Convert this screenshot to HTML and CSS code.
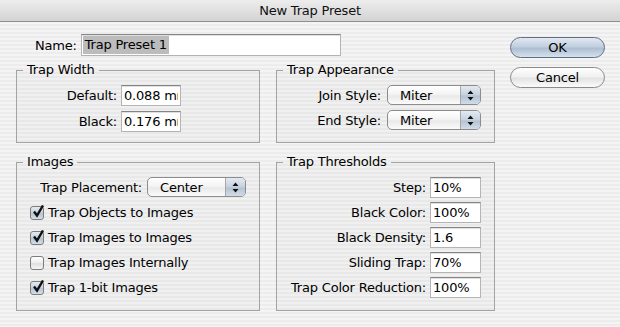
FILE: index.html
```html
<!DOCTYPE html>
<html lang="en">
<head>
    <meta charset="UTF-8">
    <title>New Trap Preset</title>
    <link rel="stylesheet" href="styles.css">
</head>
<body>
    <div class="titlebar">New Trap Preset</div>
    <div class="dialog">
        <div class="form">
            <div class="name-row">
                <label>Name:</label>
                <div class="textfield name-field"><span class="selected-text">Trap Preset 1</span></div>
            </div>
            <div class="groups">
                <fieldset class="group trap-width">
                    <legend>Trap Width</legend>
                    <div class="field-grid">
                        <label>Default:</label>
                        <input class="textfield" type="text" value="0.088 mm">
                        <label>Black:</label>
                        <input class="textfield" type="text" value="0.176 mm">
                    </div>
                </fieldset>
                <fieldset class="group trap-appearance">
                    <legend>Trap Appearance</legend>
                    <div class="field-grid popups">
                        <label>Join Style:</label>
                        <div class="popup"><span>Miter</span><span class="popup-arrows"><svg width="7" height="11" viewBox="0 0 7 11"><path d="M3.5 0.5 L6.5 4 L0.5 4 Z M3.5 10.5 L6.5 7 L0.5 7 Z" fill="#111"/></svg></span></div>
                        <label>End Style:</label>
                        <div class="popup"><span>Miter</span><span class="popup-arrows"><svg width="7" height="11" viewBox="0 0 7 11"><path d="M3.5 0.5 L6.5 4 L0.5 4 Z M3.5 10.5 L6.5 7 L0.5 7 Z" fill="#111"/></svg></span></div>
                    </div>
                </fieldset>
                <fieldset class="group images">
                    <legend>Images</legend>
                    <div class="placement-row">
                        <label>Trap Placement:</label>
                        <div class="popup wide-popup"><span>Center</span><span class="popup-arrows"><svg width="7" height="11" viewBox="0 0 7 11"><path d="M3.5 0.5 L6.5 4 L0.5 4 Z M3.5 10.5 L6.5 7 L0.5 7 Z" fill="#111"/></svg></span></div>
                    </div>
                    <div class="check-row"><span class="checkbox checked"><svg width="14" height="14" viewBox="0 0 14 14"><path d="M3 6.5 L6 10.5 L12 0.5" fill="none" stroke="#111" stroke-width="2.4"/></svg></span>Trap Objects to Images</div>
                    <div class="check-row"><span class="checkbox checked"><svg width="14" height="14" viewBox="0 0 14 14"><path d="M3 6.5 L6 10.5 L12 0.5" fill="none" stroke="#111" stroke-width="2.4"/></svg></span>Trap Images to Images</div>
                    <div class="check-row"><span class="checkbox"></span>Trap Images Internally</div>
                    <div class="check-row"><span class="checkbox checked"><svg width="14" height="14" viewBox="0 0 14 14"><path d="M3 6.5 L6 10.5 L12 0.5" fill="none" stroke="#111" stroke-width="2.4"/></svg></span>Trap 1-bit Images</div>
                </fieldset>
                <fieldset class="group thresholds">
                    <legend>Trap Thresholds</legend>
                    <div class="field-grid">
                        <label>Step:</label>
                        <input class="textfield" type="text" value="10%">
                        <label>Black Color:</label>
                        <input class="textfield" type="text" value="100%">
                        <label>Black Density:</label>
                        <input class="textfield" type="text" value="1.6">
                        <label>Sliding Trap:</label>
                        <input class="textfield" type="text" value="70%">
                        <label>Trap Color Reduction:</label>
                        <input class="textfield" type="text" value="100%">
                    </div>
                </fieldset>
            </div>
        </div>
        <div class="buttons">
            <button class="btn default">OK</button>
            <button class="btn">Cancel</button>
        </div>
    </div>
</body>
</html>
```

FILE: styles.css
```css
body {
    margin: 0;
    width: 620px;
    height: 327px;
    overflow: hidden;
    font-family: 'DejaVu Sans', sans-serif;
    font-size: 13px;
    letter-spacing: -0.2px;
    color: #000;
    background: repeating-linear-gradient(#ececec 0 2px, #f4f4f4 2px 4px);
}
.titlebar {
    height: 21px;
    line-height: 22px;
    text-align: center;
    color: #111;
    background: linear-gradient(#ededed, #d3d3d3);
    border-bottom: 1px solid #8e8e8e;
}
.dialog {
    display: flex;
    padding: 12px 0 0 16px;
    gap: 15px;
}
.form {
    display: flex;
    flex-direction: column;
}
.name-row {
    display: flex;
    align-items: center;
    gap: 4px;
    padding-left: 19px;
}
.textfield {
    box-sizing: border-box;
    height: 21px;
    margin: 0;
    padding: 0 2px;
    font-family: inherit;
    font-size: 13px;
    letter-spacing: -0.2px;
    color: #000;
    background: #fff;
    border: 1px solid #b4b4b4;
    border-top-color: #858585;
    box-shadow: inset 0 1px 0 #e0e0e0;
    border-radius: 0;
    outline: none;
}
.name-field {
    width: 260px;
    height: 22px;
    display: flex;
    align-items: center;
    padding: 0 1px;
}
.selected-text {
    background: #bcbcbc;
    line-height: 18px;
    padding: 0 2px;
}
.groups {
    display: grid;
    grid-template-columns: 244px 219px;
    column-gap: 16px;
    row-gap: 11px;
    margin-top: 6px;
}
.group {
    margin: 0;
    min-width: 0;
    border: 1px solid #a3a3a3;
    background: rgba(0, 0, 0, 0.015);
    padding: 7px 13px 10px 13px;
}
.group legend {
    padding: 0 4px;
    margin-left: -7px;
    line-height: 16px;
}
.field-grid {
    display: grid;
    grid-template-columns: 1fr auto;
    align-items: center;
    column-gap: 4px;
    row-gap: 5px;
}
.field-grid label {
    text-align: right;
}
.trap-width .field-grid {
    padding-right: 65px;
}
.trap-width .textfield {
    width: 60px;
}
.field-grid.popups {
    column-gap: 6px;
    row-gap: 5px;
}
.thresholds .field-grid {
    row-gap: 4px;
}
.thresholds .textfield {
    width: 51px;
}
.popup {
    box-sizing: border-box;
    width: 94px;
    height: 20px;
    display: flex;
    align-items: center;
    justify-content: space-between;
    border: 1px solid #8c8c8c;
    border-radius: 5px;
    background: linear-gradient(#ffffff, #f4f4f4 45%, #e9e9e9 55%, #fbfbfb);
    overflow: hidden;
}
.popup span:first-child {
    padding-left: 12px;
}
.popup-arrows {
    width: 19px;
    height: 100%;
    display: flex;
    align-items: center;
    justify-content: center;
    border-left: 1px solid #a7a7a7;
    background: linear-gradient(#e3e9f1, #c6d1de 50%, #b3c1d2 55%, #d3dde9);
}
.placement-row {
    display: flex;
    align-items: center;
    justify-content: flex-end;
    gap: 5px;
    margin-bottom: 3px;
}
.wide-popup {
    width: 99px;
}
.check-row {
    display: flex;
    align-items: center;
    height: 25px;
    gap: 4px;
}
.checkbox {
    box-sizing: border-box;
    width: 14px;
    height: 14px;
    border: 1px solid #7c7c7c;
    border-radius: 3px;
    background: linear-gradient(#ffffff, #ececec 50%, #dedede 55%, #f6f6f6);
    position: relative;
}
.checked {
    background: linear-gradient(#e4eaf2, #c4cfdd 50%, #b6c3d4 55%, #d6dfea);
}
.checkbox svg {
    position: absolute;
    left: 0;
    top: -2px;
}
.buttons {
    display: flex;
    flex-direction: column;
    gap: 9px;
    padding-top: 3px;
}
.btn {
    width: 95px;
    height: 21px;
    padding: 0;
    font-family: inherit;
    font-size: 13px;
    letter-spacing: -0.2px;
    color: #000;
    border: 1px solid #8a8a8a;
    border-radius: 11px;
    background: linear-gradient(#ffffff, #f0f0f0 45%, #e3e3e3 55%, #fbfbfb);
}
.btn.default {
    border-color: #5f6f84;
    background: linear-gradient(#e1e8f1, #c2cfde 45%, #aebfd3 55%, #d6e1ed);
}
```
